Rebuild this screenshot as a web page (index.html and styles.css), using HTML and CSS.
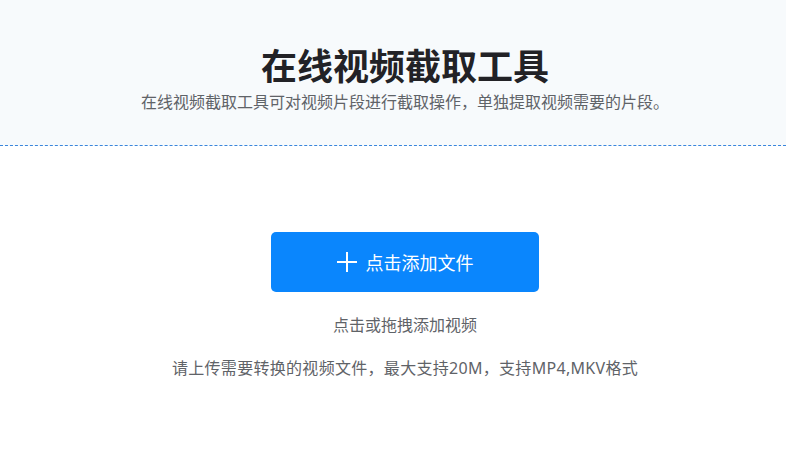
FILE: index.html
```html
<!DOCTYPE html>
<html lang="zh-CN">
<head>
<meta charset="utf-8">
<link rel="stylesheet" href="styles.css">
</head>
<body>
<header class="hero">
  <h1 class="title">在线视频截取工具</h1>
  <p class="subtitle">在线视频截取工具可对视频片段进行截取操作，单独提取视频需要的片段。</p>
</header>
<main class="upload">
  <button class="upload-btn" type="button">
    <svg class="plus" width="20" height="20" viewBox="0 0 20 20" aria-hidden="true">
      <path d="M10 0V20M0 10H20" stroke="#fff" stroke-width="2" fill="none"/>
    </svg>
    <span>点击添加文件</span>
  </button>
  <p class="hint">点击或拖拽添加视频</p>
  <p class="note">请上传需要转换的视频文件，最大支持20M，支持MP4,MKV格式</p>
</main>
</body>
</html>
```
FILE: styles.css
```css
html, body {
  margin: 0;
  padding: 0;
  background: #fff;
  font-family: "Noto Sans", "Noto Sans CJK SC", sans-serif;
}
.hero {
  background: #f7fafc;
  padding: 40px 0 31px 24px;
  border-bottom: 1px dashed #3a86dc;
  text-align: center;
}
.title {
  margin: 0;
  font-family: "Noto Sans CJK SC", sans-serif;
  font-size: 36px;
  line-height: 48px;
  font-weight: 700;
  color: #222226;
}
.subtitle {
  margin: 2px 0 0;
  font-size: 16px;
  line-height: 24px;
  color: #5f6368;
}
.upload {
  display: flex;
  flex-direction: column;
  align-items: center;
  padding: 86px 0 0 24px;
}
.upload-btn {
  width: 268px;
  height: 60px;
  border: none;
  border-radius: 5px;
  background: #0a86fd;
  color: #fff;
  display: flex;
  align-items: center;
  justify-content: center;
  gap: 9px;
  font-family: inherit;
  font-size: 18px;
  padding: 0;
}
.plus { display: block; }
.hint {
  margin: 21px 0 0;
  font-size: 16px;
  line-height: 24px;
  color: #5f6368;
}
.note {
  margin: 19px 0 0;
  font-size: 16px;
  line-height: 24px;
  letter-spacing: 0.3px;
  color: #5f6368;
}
```
